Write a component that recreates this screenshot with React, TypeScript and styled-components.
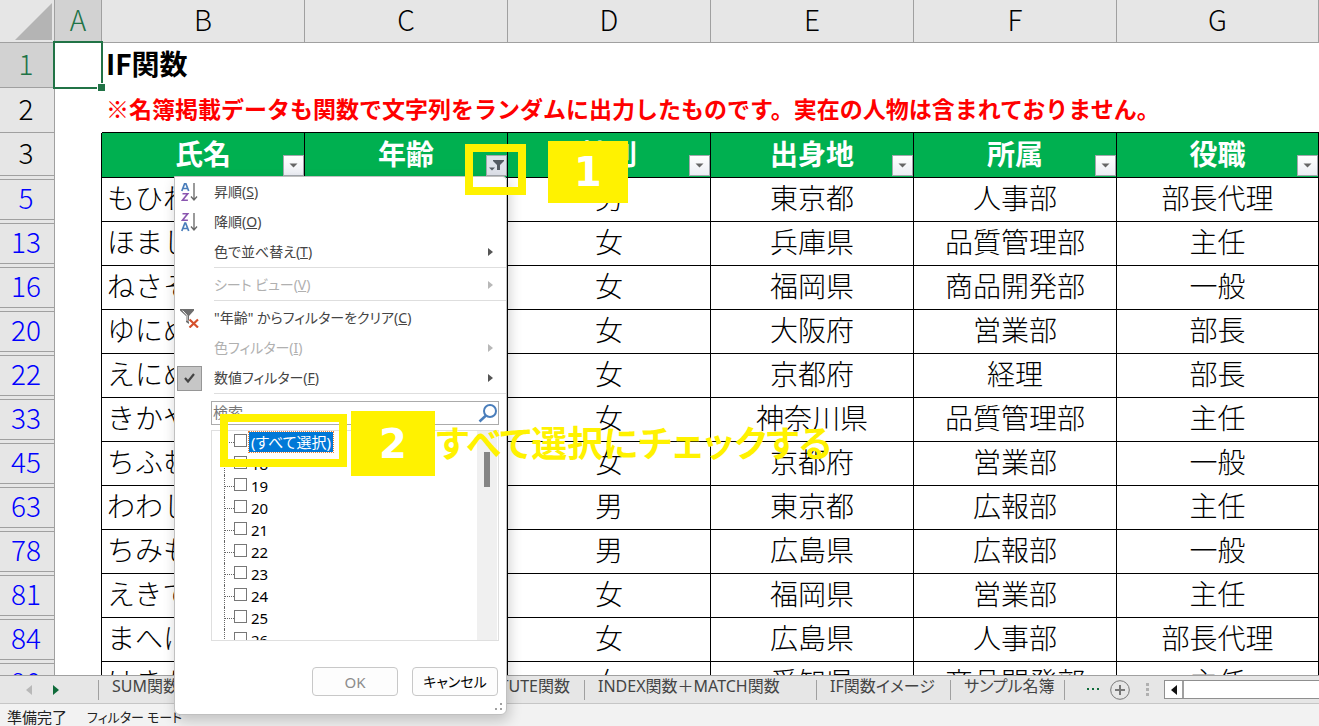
import React from "react";
import styled, { createGlobalStyle, css } from "styled-components";

const GlobalStyle = createGlobalStyle`
  * { box-sizing: border-box; }
  body { margin: 0; font-family: "Noto Sans CJK JP", "Noto Sans", sans-serif; background: #f2f2f2; }
  button, input { font: inherit; color: inherit; }
`;

const YELLOW = "#fff200";
const UI_FONT = `"Noto Sans", "Noto Sans CJK JP", sans-serif`;

const Window = styled.main`
  position: relative;
  display: flex;
  flex-direction: column;
  height: 100vh;
  overflow: hidden;
`;

const SheetArea = styled.section`
  flex: 1;
  min-height: 0;
  overflow: hidden;
  background: #fff;
`;

/* ---------- worksheet grid ---------- */

const Grid = styled.table`
  width: 100%;
  table-layout: fixed;
  border-collapse: separate;
  border-spacing: 0;
  font-size: 28px;
  line-height: 36px;
  font-weight: 300;
  color: #000;
`;

const Col = styled.col<{ $w?: number }>`
  ${(p) => p.$w && css`width: ${p.$w}px;`}
`;

const Row = styled.tr<{ $h: number }>`
  height: ${(p) => p.$h}px;
`;

const ColHead = styled.th<{ $active?: boolean }>`
  padding: 0 0 5px;
  font-weight: 300;
  color: ${(p) => (p.$active ? "#217346" : "#000")};
  background: ${(p) => (p.$active ? "#d2d2d2" : "#e6e6e6")};
  border-right: 1px solid #a0a0a0;
  border-bottom: 1px solid ${(p) => (p.$active ? "#217346" : "#a0a0a0")};
`;

const CornerHead = styled(ColHead)`
  padding: 0;
`;

const RowHead = styled.th<{ $active?: boolean }>`
  padding: 0 2px 5px 0;
  font-weight: 300;
  color: ${(p) => (p.$active ? "#217346" : "#000")};
  background: ${(p) => (p.$active ? "#d2d2d2" : "#e6e6e6")};
  border-right: 1px solid #a0a0a0;
  border-bottom: 1px solid #a0a0a0;
`;

/* Row header beside hidden rows: a thin gap shows between its lines. */
const GapRowHead = styled.th<{ $filtered?: boolean }>`
  padding: ${(p) => (p.$filtered ? 1 : 0)}px 0 2px;
  vertical-align: top;
  font-weight: 300;
  color: ${(p) => (p.$filtered ? "#0000ff" : "#000")};
  background: #e6e6e6;
  border-right: 1px solid #a0a0a0;

  span {
    display: block;
    height: ${(p) => (p.$filtered ? 41 : 43)}px;
    padding: 0 2px 0 0;
    line-height: ${(p) => (p.$filtered ? 34 : 38)}px;
    border-top: ${(p) => (p.$filtered ? "1px solid #a0a0a0" : "0")};
    border-bottom: 1px solid #a0a0a0;
  }
`;

const Corner = styled.svg`
  display: block;
  width: 37px;
  height: 37px;
  margin: 0 2px 0 auto;
`;

const ActiveCell = styled.td`
  position: relative;
  padding: 0;
`;

const Selection = styled.div`
  position: absolute;
  inset: -2px -1px -1px -2px;
  border: 2px solid #217346;
  &::after {
    content: "";
    position: absolute;
    right: -4px;
    bottom: -4px;
    width: 7px;
    height: 7px;
    background: #217346;
    border: solid #fff;
    border-width: 1px 0 0 1px;
  }
`;

const SideCell = styled.td<{ $edge?: boolean }>`
  padding: 0;
  border-right: ${(p) => (p.$edge ? "1px solid #000" : "0")};
`;

const WideCell = styled.td<{ $note?: boolean }>`
  padding: 0 0 5px 4px;
  white-space: nowrap;
  font-weight: 700;
  ${(p) => p.$note && css`
    font-size: 23px;
    color: #ff0000;
    border-bottom: 1px solid #000;
  `}
`;

const FieldHead = styled.th`
  position: relative;
  padding: 0 0 4px;
  font-weight: 700;
  color: #fff;
  background: #00b050;
  border-right: 1px solid #000;
  border-bottom: 1px solid #000;
`;

const FilterButton = styled.button<{ $on?: boolean }>`
  position: absolute;
  right: 0;
  bottom: 1px;
  width: 21px;
  height: 21px;
  padding: 0;
  display: grid;
  place-items: center;
  border: 1px solid #a3a8ae;
  background: ${(p) => (p.$on ? "#dfe2ea" : "linear-gradient(#fff, #eceef4)")};
`;

const Cell = styled.td<{ $left?: boolean }>`
  padding: 0 0 5px ${(p) => (p.$left ? 5 : 0)}px;
  text-align: ${(p) => (p.$left ? "left" : "center")};
  white-space: nowrap;
  overflow: hidden;
  border-right: 1px solid #000;
  border-bottom: 1px solid #000;
`;

/* ---------- sheet tabs and status bar ---------- */

const TabBar = styled.nav`
  display: flex;
  align-items: center;
  height: 29px;
  flex: none;
  background: #e6e6e6;
  border-top: 1px solid #a0a0a0;
  border-bottom: 1px solid #c6c6c6;
  color: #444;
`;

const TabArrows = styled.div`
  display: flex;
  gap: 17px;
  width: 98px;
  padding-left: 24px;
  flex: none;
`;

const BareButton = styled.button`
  display: grid;
  place-items: center;
  padding: 0;
  border: 0;
  background: none;
  width: 10px;
  height: 20px;
`;

const SheetTab = styled.button<{ $w: number; $end?: boolean }>`
  flex: none;
  width: ${(p) => p.$w}px;
  height: 20px;
  padding: 0 14px 8px 13px;
  border: 0;
  border-left: 1px solid #a0a0a0;
  background: none;
  font-family: ${UI_FONT};
  font-size: 16px;
  line-height: 12px;
  font-feature-settings: "palt";
  white-space: nowrap;
  text-align: ${(p) => (p.$end ? "right" : "left")};
`;

const TabTools = styled.div`
  display: flex;
  align-items: center;
  flex: 1;
  height: 20px;
  padding-left: 20px;
  border-left: 1px solid #a0a0a0;
`;

const MoreTabs = styled(BareButton)`
  width: 16px;
`;

const AddSheet = styled(BareButton)`
  width: 20px;
  margin: 0 16px 0 9px;
`;

const Grip = styled.svg`
  width: 3px;
  height: 13px;
  margin-right: 15px;
  flex: none;
`;

const HScroll = styled.div`
  flex: 1;
  display: flex;
  height: 19px;
  border: 1px solid #8f8f8f;
  border-right: 0;
  background: #fff;
`;

const HScrollArrow = styled.button`
  display: grid;
  place-items: center;
  width: 19px;
  padding: 0;
  border: 0;
  border-right: 2px solid #a0a0a0;
  background: #fff;
`;

const StatusBar = styled.footer`
  display: flex;
  gap: 20px;
  flex: none;
  height: 22px;
  padding-left: 7px;
  overflow: hidden;
  background: #f2f2f2;
  font-size: 15px;
  line-height: 26px;
  font-feature-settings: "palt";
  color: #222;
`;

const Mode = styled.span`
  font-size: 13px;
`;

/* ---------- filter menu ---------- */

const Menu = styled.section`
  position: absolute;
  left: 174px;
  top: 176px;
  width: 333px;
  border: 1px solid #c0c0c0;
  border-radius: 0 4px 6px 6px;
  background: #fff;
  box-shadow: 2px 6px 14px rgba(0, 0, 0, 0.2);
  font-family: ${UI_FONT};
  font-size: 14px;
  line-height: 20px;
  font-feature-settings: "palt";
  color: #444;
`;

const MenuItem = styled.button`
  display: grid;
  grid-template-columns: 39px 1fr 18px;
  align-items: center;
  width: 100%;
  height: 30px;
  padding: 0;
  border: 0;
  background: none;
  text-align: left;
  &:disabled { color: #b0b0b0; }
`;

const MenuIcon = styled.span<{ $checked?: boolean }>`
  display: grid;
  place-items: center;
  width: 25px;
  height: 25px;
  margin-left: 2px;
  border: 1px solid ${(p) => (p.$checked ? "#969696" : "transparent")};
  background: ${(p) => (p.$checked ? "#c6c6c6" : "none")};
`;

const Separator = styled.hr`
  height: 3px;
  margin: 0 0 0 39px;
  border: 0;
  border-top: 1px solid #dedede;
`;

const SearchBox = styled.label`
  display: flex;
  align-items: center;
  height: 24px;
  margin: 5px 7px 0 36px;
  border: 1px solid #ababab;
`;

const SearchInput = styled.input`
  flex: 1;
  min-width: 0;
  height: 22px;
  padding: 0 1px 2px;
  border: 0;
  outline: 0;
  background: none;
  font-size: 15px;
  &::placeholder { color: #777; opacity: 1; }
`;

const TreeBox = styled.div`
  display: flex;
  height: 211px;
  margin: 5px 7px 0 36px;
  border: 1px solid #dfdfdf;
  overflow: hidden;
`;

const Tree = styled.ul`
  flex: 1;
  margin: 0;
  padding: 0 0 0 12px;
  list-style: none;
  font-size: 15px;
  color: #000;
`;

const TreeRow = styled.li`
  display: flex;
  align-items: center;
  height: 22px;
  border-left: 1px dotted #666;
  &::before {
    content: "";
    width: 9px;
    border-top: 1px dotted #666;
  }
`;

const TreeLabel = styled.label<{ $selected?: boolean }>`
  display: flex;
  align-items: center;
  gap: 2px;
  span {
    padding: 0 2px;
    line-height: 20px;
    outline: ${(p) => (p.$selected ? "1px dotted #f08030" : "0")};
    background: ${(p) => (p.$selected ? "#0078d7" : "none")};
    color: ${(p) => (p.$selected ? "#fff" : "#000")};
  }
`;

const Check = styled.input`
  appearance: none;
  width: 13px;
  height: 13px;
  margin: 0 0 3px;
  border: 1px solid #777;
  background: #fff;
`;

const TreeScroll = styled.div`
  width: 20px;
  margin-right: 1px;
  padding: 21px 6px 0 7px;
  background: #f0f0f0;
`;

const TreeThumb = styled.div`
  height: 35px;
  width: 6px;
  background: #858585;
`;

const Actions = styled.div`
  display: flex;
  justify-content: flex-end;
  gap: 14px;
  padding: 26px 8px 0 0;
`;

const ActionButton = styled.button`
  width: 86px;
  height: 29px;
  padding: 0;
  border: 1px solid #c8c8c8;
  border-radius: 4px;
  background: #fdfdfd;
  color: #000;
  &:disabled { color: #8c8c8c; font-size: 15px; }
`;

const ResizeGrip = styled.svg`
  display: block;
  width: 8px;
  height: 8px;
  margin: 7px 3px 3px auto;
`;

/* ---------- tutorial call-outs ---------- */

type Box = { $x: number; $y: number; $w: number; $h: number };

const Frame = styled.div<Box>`
  position: absolute;
  left: ${(p) => p.$x}px;
  top: ${(p) => p.$y}px;
  width: ${(p) => p.$w}px;
  height: ${(p) => p.$h}px;
  border: 8px solid ${YELLOW};
  pointer-events: none;
`;

const Step = styled.div<Box>`
  position: absolute;
  left: ${(p) => p.$x}px;
  top: ${(p) => p.$y}px;
  width: ${(p) => p.$w}px;
  height: ${(p) => p.$h}px;
  display: grid;
  place-items: center;
  background: ${YELLOW};
  color: #fff;
  font: 700 40px/48px "DejaVu Sans", sans-serif;
`;

const StepText = styled.p`
  position: absolute;
  left: 436px;
  top: 414px;
  margin: 0;
  color: ${YELLOW};
  font-size: 36px;
  line-height: 54px;
  font-weight: 700;
  font-feature-settings: "palt";
  white-space: nowrap;
`;

/* ---------- data ---------- */

const fields = ["氏名", "年齢", "性別", "出身地", "所属", "役職"];

const people: [number, string, string, string, string, string][] = [
  [5, "もひれ", "男", "東京都", "人事部", "部長代理"],
  [13, "ほまし", "女", "兵庫県", "品質管理部", "主任"],
  [16, "ねさそ", "女", "福岡県", "商品開発部", "一般"],
  [20, "ゆにぬ", "女", "大阪府", "営業部", "部長"],
  [22, "えにぬ", "女", "京都府", "経理", "部長"],
  [33, "きかや", "女", "神奈川県", "品質管理部", "主任"],
  [45, "ちふむ", "女", "京都府", "営業部", "一般"],
  [63, "わわし", "男", "東京都", "広報部", "主任"],
  [78, "ちみも", "男", "広島県", "広報部", "一般"],
  [81, "えきて", "女", "福岡県", "営業部", "主任"],
  [84, "まへに", "女", "広島県", "人事部", "部長代理"],
  [90, "はきか", "女", "愛知県", "商品開発部", "主任"],
];

const ages = ["18", "19", "20", "21", "22", "23", "24", "25", "26"];

/* ---------- icons ---------- */

const DropArrow = () => (
  <svg width="9" height="5" viewBox="0 0 9 5"><path d="M0.5 0.5h8L4.5 4.5z" fill="#666" /></svg>
);

const FilterOn = () => (
  <svg width="15" height="13" viewBox="0 0 15 13">
    <path d="M4 1h11v1l-4 4v5H8V6L4 2z" fill="#555b63" />
    <path d="M0 8.500h6L3 11.500z" fill="#555b63" />
  </svg>
);

const SortIcon = ({ desc }: { desc?: boolean }) => {
  const a = "M0.8 8 3.9 0h.7l3.1 8M1.900 5.500h4.700";
  const z = "M1.500 .8h5.200L1.500 7.200h5.400";
  return (
    <svg width="17" height="19" viewBox="0 0 17 19" fill="none">
      <path d={a} stroke="#4a7ebb" strokeWidth="1.700" transform={desc ? "translate(0 10)" : undefined} />
      <path d={z} stroke="#8a56b0" strokeWidth="1.600" transform={desc ? undefined : "translate(0 10)"} />
      <path d="M13 0v17M10 13.500l3 3.500 3-3.500" stroke="#666" strokeWidth="1.300" />
    </svg>
  );
};

const ClearFilter = () => (
  <svg width="19" height="19" viewBox="0 0 19 19">
    <path d="M0 0h14v1.500L9 7v8l-3-2V7L0 1.500z" fill="#6e6e6e" />
    <path d="M2.600 1.600 7 6.300v5.500" stroke="#fff" strokeWidth="1" fill="none" />
    <path d="M9.500 10.500l8.500 8M18 10.500l-8.500 8" stroke="#fff" strokeWidth="4" />
    <path d="M9.500 10.500l8.500 8M18 10.500l-8.500 8" stroke="#d5502c" strokeWidth="2.200" />
  </svg>
);

const Tick = () => (
  <svg width="11" height="10" viewBox="0 0 11 10">
    <path d="M1 5l3 3.500L10 1" stroke="#444" strokeWidth="2.200" fill="none" />
  </svg>
);

const Caret = ({ off }: { off?: boolean }) => (
  <svg width="5" height="8" viewBox="0 0 5 8"><path d="M0 0l5 4-5 4z" fill={off ? "#b8b8b8" : "#555"} /></svg>
);

const TabArrow = ({ left, color }: { left?: boolean; color: string }) => (
  <svg width="6" height="10" viewBox="0 0 6 10"><path d={left ? "M6 0v10L0 5z" : "M0 0v10l6-5z"} fill={color} /></svg>
);

type Entry = { icon?: React.ReactNode; checked?: boolean; text: string; k: string; sub?: boolean; off?: boolean; sep?: boolean };

const entries: Entry[] = [
  { icon: <SortIcon />, text: "昇順", k: "S" },
  { icon: <SortIcon desc />, text: "降順", k: "O" },
  { text: "色で並べ替え", k: "T", sub: true, sep: true },
  { text: "シート ビュー", k: "V", sub: true, off: true, sep: true },
  { icon: <ClearFilter />, text: "\"年齢\" からフィルターをクリア", k: "C" },
  { text: "色フィルター", k: "I", sub: true, off: true },
  { icon: <Tick />, checked: true, text: "数値フィルター", k: "F", sub: true, sep: true },
];

function Worksheet() {
  return (
    <Grid>
      <colgroup>
        <Col $w={55} />
        <Col $w={47} />
        {[1, 2, 3, 4, 5].map((n) => <Col key={n} $w={203} />)}
        <Col />
      </colgroup>
      <thead>
        <Row $h={43}>
          <CornerHead>
            <Corner viewBox="0 0 37 37"><path d="M37 0v37H0z" fill="#b4b4b4" /></Corner>
          </CornerHead>
          {["A", "B", "C", "D", "E", "F", "G"].map((c) => (
            <ColHead key={c} scope="col" $active={c === "A"}>{c}</ColHead>
          ))}
        </Row>
      </thead>
      <tbody>
        <Row $h={45}>
          <RowHead scope="row" $active>1</RowHead>
          <ActiveCell><Selection /></ActiveCell>
          <WideCell colSpan={6}>IF関数</WideCell>
        </Row>
        <Row $h={45}>
          <RowHead scope="row">2</RowHead>
          <SideCell />
          <WideCell colSpan={6} $note>
            ※名簿掲載データも関数で文字列をランダムに出力したものです。実在の人物は含まれておりません。
          </WideCell>
        </Row>
        <Row $h={45}>
          <GapRowHead scope="row"><span>3</span></GapRowHead>
          <SideCell $edge />
          {fields.map((f) => (
            <FieldHead key={f} scope="col">
              {f}
              <FilterButton $on={f === "年齢"} aria-label={`${f}のフィルター`}>
                {f === "年齢" ? <FilterOn /> : <DropArrow />}
              </FilterButton>
            </FieldHead>
          ))}
        </Row>
        {people.map(([n, name, sex, home, dept, post]) => (
          <Row key={n} $h={44}>
            <GapRowHead scope="row" $filtered><span>{n}</span></GapRowHead>
            <SideCell $edge />
            <Cell $left>{name}</Cell>
            <Cell />
            <Cell>{sex}</Cell>
            <Cell>{home}</Cell>
            <Cell>{dept}</Cell>
            <Cell>{post}</Cell>
          </Row>
        ))}
      </tbody>
    </Grid>
  );
}

function FilterMenu() {
  return (
    <Menu aria-label="フィルター">
      {entries.map((e) => (
        <React.Fragment key={e.k}>
          <MenuItem disabled={e.off}>
            <MenuIcon $checked={e.checked}>{e.icon}</MenuIcon>
            <span>{e.text}(<u>{e.k}</u>)</span>
            {e.sub && <Caret off={e.off} />}
          </MenuItem>
          {e.sep && <Separator />}
        </React.Fragment>
      ))}
      <SearchBox>
        <SearchInput placeholder="検索" aria-label="検索" />
        <svg width="20" height="20" viewBox="0 0 20 20" fill="none" stroke="#4a7ebb" strokeWidth="2">
          <circle cx="12" cy="8" r="6" /><path d="M8 12.500L1.500 18.500" strokeWidth="2.500" />
        </svg>
      </SearchBox>
      <TreeBox>
        <Tree>
          <TreeRow>
            <TreeLabel $selected><Check type="checkbox" /><span>(すべて選択)</span></TreeLabel>
          </TreeRow>
          {ages.map((a) => (
            <TreeRow key={a}>
              <TreeLabel><Check type="checkbox" /><span>{a}</span></TreeLabel>
            </TreeRow>
          ))}
        </Tree>
        <TreeScroll><TreeThumb /></TreeScroll>
      </TreeBox>
      <Actions>
        <ActionButton disabled>OK</ActionButton>
        <ActionButton>キャンセル</ActionButton>
      </Actions>
      <ResizeGrip viewBox="0 0 8 8" fill="#a0a0a0">
        <path d="M5 0h2v2H5zM0 5h2v2H0zM5 5h2v2H5z" />
      </ResizeGrip>
    </Menu>
  );
}

export default function App() {
  return (
    <Window>
      <GlobalStyle />
      <SheetArea><Worksheet /></SheetArea>
      <TabBar aria-label="シート">
        <TabArrows>
          <BareButton aria-label="前のシート"><TabArrow left color="#b8b8b8" /></BareButton>
          <BareButton aria-label="次のシート"><TabArrow color="#0f6b3a" /></BareButton>
        </TabArrows>
        <SheetTab $w={200}>SUM関数</SheetTab>
        <SheetTab $w={286} $end>SUBSTITUTE関数</SheetTab>
        <SheetTab $w={232}>INDEX関数＋MATCH関数</SheetTab>
        <SheetTab $w={134}>IF関数イメージ</SheetTab>
        <SheetTab $w={114}>サンプル名簿</SheetTab>
        <TabTools>
          <MoreTabs aria-label="その他のシート">
            <svg width="14" height="3" viewBox="0 0 14 3" fill="#0f6b3a"><path d="M1 0h2v2H1zM6 0h2v2H6zM11 0h2v2h-2z" /></svg>
          </MoreTabs>
          <AddSheet aria-label="新しいシート">
            <svg width="20" height="20" viewBox="0 0 20 20" fill="none" stroke="#777">
              <circle cx="10" cy="10" r="9.300" /><path d="M10 5v10M5 10h10" strokeWidth="2" />
            </svg>
          </AddSheet>
          <Grip viewBox="0 0 3 13" fill="#b0b0b0"><path d="M0 0h3v3H0zM0 5h3v3H0zM0 10h3v3H0z" /></Grip>
          <HScroll>
            <HScrollArrow aria-label="左へスクロール"><TabArrow left color="#111" /></HScrollArrow>
          </HScroll>
        </TabTools>
      </TabBar>
      <StatusBar><span>準備完了</span><Mode>フィルター モード</Mode></StatusBar>
      <FilterMenu />
      <Frame $x={465} $y={144} $w={61} $h={51} />
      <Step $x={548} $y={141} $w={80} $h={62}>1</Step>
      <Frame $x={220} $y={414} $w={127} $h={53} />
      <Step $x={351} $y={411} $w={84} $h={65}>2</Step>
      <StepText>すべて選択にチェックする</StepText>
    </Window>
  );
}
